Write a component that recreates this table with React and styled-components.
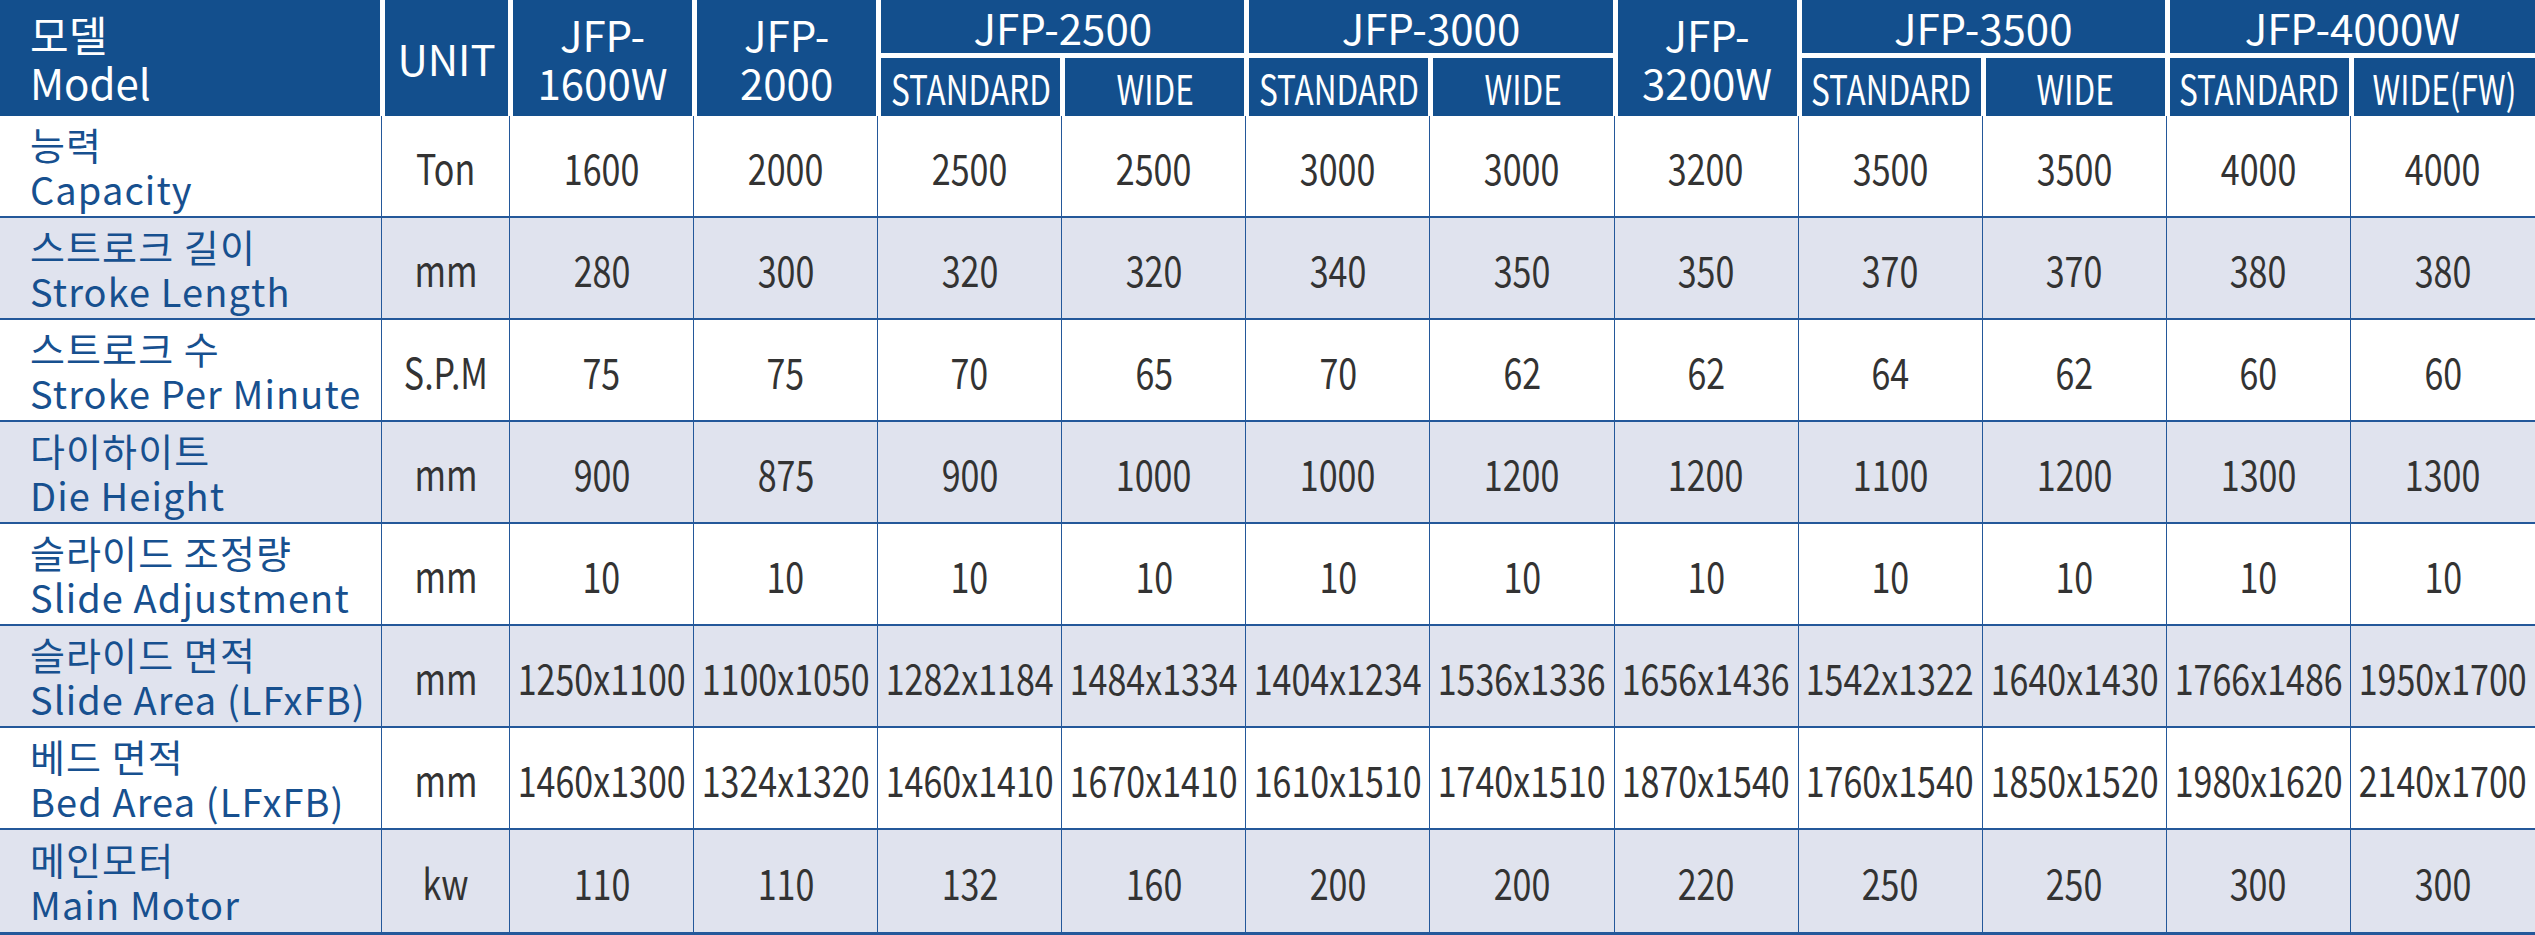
import React from 'react'
import styled, { createGlobalStyle, css } from 'styled-components'

const GlobalStyle = createGlobalStyle`
  html, body {
    margin: 0;
    padding: 0;
    background: #fff;
  }
  body {
    font-family: "Noto Sans CJK KR", "Noto Sans", sans-serif;
  }
`

const navy = '#134f8d'
const rule = '#24589a'

const cols = css`
  display: grid;
  grid-template-columns: 382px 128px repeat(11, minmax(0, 1fr));
`

const Table = styled.div`
  width: 2535px;
  height: 935px;
  display: flex;
  flex-direction: column;
`

const Head = styled.div`
  ${cols};
  grid-template-rows: 56px 60px;
`

const HeadCell = styled.div`
  box-sizing: border-box;
  background: ${navy};
  color: #fff;
  border: 0 solid #fff;
  border-left-width: ${p => (p.$first ? 0 : 3)}px;
  border-right-width: ${p => (p.$last ? 0 : 2)}px;
  grid-row: ${p => (p.$tall ? 'span 2' : 'auto')};
  grid-column: ${p => (p.$wide ? 'span 2' : 'auto')};
  border-bottom-width: ${p => (p.$wide ? 3 : 0)}px;
  border-top-width: ${p => (p.$sub ? 2 : 0)}px;
  display: flex;
  flex-direction: column;
  justify-content: center;
  align-items: ${p => (p.$left ? 'flex-start' : 'center')};
  padding-left: ${p => (p.$left ? 30 : 0)}px;
  font-size: ${p => (p.$sub ? 41 : 42)}px;
  line-height: 48px;
  white-space: nowrap;
`

const Squeeze = styled.span`
  display: inline-block;
  transform: scaleX(${p => p.$x || 0.81});
  transform-origin: center;
`

const Row = styled.div`
  ${cols};
  box-sizing: border-box;
  height: ${p => (p.$end ? 'auto' : '102px')};
  flex: ${p => (p.$end ? 1 : 'none')};
  background: ${p => (p.$shade ? '#e0e3ee' : '#fff')};
  border-bottom: ${p => (p.$end ? 3 : 2)}px solid ${rule};
`

const Cell = styled.div`
  box-sizing: border-box;
  border-right: 1px solid ${rule};
  &:last-child {
    border-right: 0;
  }
  display: flex;
  align-items: center;
  justify-content: center;
  color: #333;
  font-size: 42px;
  white-space: nowrap;
`

const LabelCell = styled(Cell)`
  flex-direction: column;
  align-items: flex-start;
  padding-left: 30px;
  color: #17508f;
  font-size: 38px;
  letter-spacing: 1.1px;
  line-height: 45px;
`

const Line = styled.span`
  display: block;
`

const groups = [
  { name: ['JFP-', '1600W'] },
  { name: ['JFP-', '2000'] },
  { name: 'JFP-2500', subs: ['STANDARD', 'WIDE'] },
  { name: 'JFP-3000', subs: ['STANDARD', 'WIDE'] },
  { name: ['JFP-', '3200W'] },
  { name: 'JFP-3500', subs: ['STANDARD', 'WIDE'] },
  { name: 'JFP-4000W', subs: ['STANDARD', 'WIDE(FW)'] },
]

const rows = [
  ['능력', 'Capacity', 'Ton', ['1600', '2000', '2500', '2500', '3000', '3000', '3200', '3500', '3500', '4000', '4000']],
  ['스트로크 길이', 'Stroke Length', 'mm', ['280', '300', '320', '320', '340', '350', '350', '370', '370', '380', '380']],
  ['스트로크 수', 'Stroke Per Minute', 'S.P.M', ['75', '75', '70', '65', '70', '62', '62', '64', '62', '60', '60']],
  ['다이하이트', 'Die Height', 'mm', ['900', '875', '900', '1000', '1000', '1200', '1200', '1100', '1200', '1300', '1300']],
  ['슬라이드 조정량', 'Slide Adjustment', 'mm', Array(11).fill('10')],
  ['슬라이드 면적', 'Slide Area (LFxFB)', 'mm', ['1250x1100', '1100x1050', '1282x1184', '1484x1334', '1404x1234', '1536x1336', '1656x1436', '1542x1322', '1640x1430', '1766x1486', '1950x1700']],
  ['베드 면적', 'Bed Area (LFxFB)', 'mm', ['1460x1300', '1324x1320', '1460x1410', '1670x1410', '1610x1510', '1740x1510', '1870x1540', '1760x1540', '1850x1520', '1980x1620', '2140x1700']],
  ['메인모터', 'Main Motor', 'kw', ['110', '110', '132', '160', '200', '200', '220', '250', '250', '300', '300']],
]

const subCells = groups
  .filter(g => g.subs)
  .flatMap(g => g.subs.map((s, i) => ({ key: g.name + s, text: s, last: g.name === 'JFP-4000W' && i === 1 })))

const App = () => (
  <>
    <GlobalStyle />
    <Table>
      <Head>
        <HeadCell $tall $first $left>
          <Line>모델</Line>
          <Line>Model</Line>
        </HeadCell>
        <HeadCell $tall>UNIT</HeadCell>
        {groups.map((g, i) =>
          g.subs ? (
            <HeadCell key={i} $wide $last={i === groups.length - 1}>{g.name}</HeadCell>
          ) : (
            <HeadCell key={i} $tall>
              <Line>{g.name[0]}</Line>
              <Line>{g.name[1]}</Line>
            </HeadCell>
          )
        )}
        {subCells.map(s => (
          <HeadCell key={s.key} $sub $last={s.last}>
            <Squeeze $x={0.77}>{s.text}</Squeeze>
          </HeadCell>
        ))}
      </Head>
      {rows.map(([ko, en, unit, values], i) => (
        <Row key={en} $shade={i % 2 === 1} $end={i === rows.length - 1}>
          <LabelCell>
            <Line>{ko}</Line>
            <Line>{en}</Line>
          </LabelCell>
          <Cell>
            <Squeeze>{unit}</Squeeze>
          </Cell>
          {values.map((v, j) => (
            <Cell key={j}>
              <Squeeze>{v}</Squeeze>
            </Cell>
          ))}
        </Row>
      ))}
    </Table>
  </>
)

export default App
